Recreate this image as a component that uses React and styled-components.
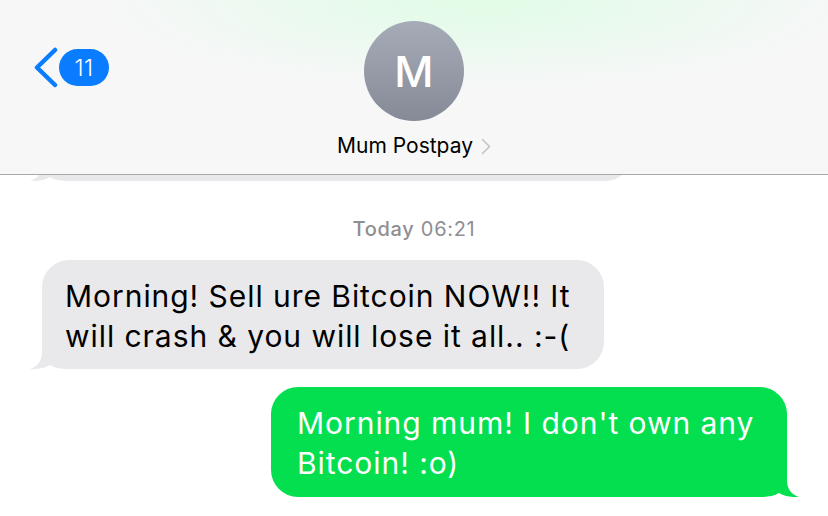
import React from "react";
import styled, { createGlobalStyle } from "styled-components";

const GlobalStyle = createGlobalStyle`
  html, body {
    margin: 0;
    padding: 0;
    background: #ffffff;
  }
  body {
    font-family: Inter, "Noto Sans", "Liberation Sans", sans-serif;
    -webkit-font-smoothing: antialiased;
  }
`;

const colors = {
  blue: "#0a7cff",
  grayBubble: "#e9e9eb",
  green: "#03df4e",
  muted: "#8e8e93"
};

const Screen = styled.div`
  width: 828px;
  height: 516px;
  overflow: hidden;
  display: flex;
  flex-direction: column;
  background: #ffffff;
`;

const Header = styled.header`
  flex: none;
  display: grid;
  grid-template-columns: 1fr auto 1fr;
  padding: 21px 0 15px;
  background: radial-gradient(
      ellipse 380px 90px at 480px 0,
      rgba(224, 252, 230, 1),
      rgba(224, 252, 230, 0)
    ),
    #f7f7f8;
  border-bottom: 1px solid #a9a9ac;
`;

const BackButton = styled.div`
  align-self: start;
  justify-self: start;
  display: flex;
  align-items: center;
  margin: 26px 0 0 33px;
`;

const Badge = styled.span`
  height: 37px;
  min-width: 50px;
  box-sizing: border-box;
  padding: 0 12px;
  border-radius: 19px;
  background: ${colors.blue};
  color: #ffffff;
  font-size: 23px;
  font-weight: 300;
  letter-spacing: 0.5px;
  display: flex;
  align-items: center;
  justify-content: center;
`;

const Contact = styled.div`
  display: flex;
  flex-direction: column;
  align-items: center;
`;

const Avatar = styled.div`
  width: 100px;
  height: 100px;
  border-radius: 50%;
  background: linear-gradient(180deg, #a6acb7 0%, #858a97 100%);
  color: #ffffff;
  font-size: 43px;
  font-weight: 500;
  display: flex;
  align-items: center;
  justify-content: center;
`;

const Name = styled.div`
  margin-top: 12px;
  font-size: 21px;
  line-height: 26px;
  color: #000000;
  display: flex;
  align-items: center;
  gap: 8px;
`;

const Chat = styled.main`
  flex: 1;
  overflow: hidden;
  display: flex;
  flex-direction: column;
`;

const Stamp = styled.div`
  align-self: center;
  margin: ${({ top }) => top}px 0 19px;
  font-size: 20px;
  line-height: 24px;
  letter-spacing: 0.7px;
  color: ${colors.muted};

  b {
    font-weight: 500;
  }
`;

const Bubble = styled.div`
  position: relative;
  box-sizing: border-box;
  width: ${({ width }) => width}px;
  min-height: ${({ height }) => (height ? `${height}px` : "auto")};
  margin-top: ${({ top }) => top || 0}px;
  align-self: ${({ out }) => (out ? "flex-end" : "flex-start")};
  margin-left: ${({ out }) => (out ? 0 : 42)}px;
  margin-right: ${({ out }) => (out ? 41 : 0)}px;
  padding: ${({ out }) => (out ? "16px 20px 14px 26px" : "16px 20px 13px 23px")};
  border-radius: 27px;
  background: ${({ out }) => (out ? colors.green : colors.grayBubble)};
  color: ${({ out }) => (out ? "#ffffff" : "#000000")};
  font-size: 30px;
  line-height: 40px;
  letter-spacing: 0.95px;
`;

const Tail = styled.svg`
  position: absolute;
  bottom: 0;
  ${({ out }) => (out ? "right: -12px; transform: scaleX(-1);" : "left: -12px;")}
`;

const BubbleTail = ({ out }) => (
  <Tail out={out ? 1 : 0} width="40" height="30" viewBox="0 0 40 30">
    <path
      d="M12 0 L12 14 C12 22 7 28 0 30 C8 30.5 15 29 20 26 C25 29 31 30 40 30 L40 0 Z"
      fill={out ? colors.green : colors.grayBubble}
    />
  </Tail>
);

const Message = ({ out, width, height, top, children }) => (
  <Bubble out={out ? 1 : 0} width={width} height={height} top={top}>
    <BubbleTail out={out} />
    <span style={{ position: "relative" }}>{children}</span>
  </Bubble>
);

export default function App() {
  return (
    <Screen>
      <GlobalStyle />
      <Header>
        <BackButton>
          <svg width="26" height="41" viewBox="0 0 26 41">
            <path
              d="M22 3 L4 20.5 L22 38"
              fill="none"
              stroke={colors.blue}
              strokeWidth="4.5"
              strokeLinecap="round"
              strokeLinejoin="round"
            />
          </svg>
          <Badge>11</Badge>
        </BackButton>
        <Contact>
          <Avatar>M</Avatar>
          <Name>
            Mum Postpay
            <svg width="10" height="17" viewBox="0 0 10 17">
              <path
                d="M1.5 1.5 L8.5 8.5 L1.5 15.5"
                fill="none"
                stroke="#c4c4c8"
                strokeWidth="1.6"
                strokeLinecap="round"
                strokeLinejoin="round"
              />
            </svg>
          </Name>
        </Contact>
        <div />
      </Header>
      <Chat>
        <Message width={590} height={110} top={-104} />
        <Stamp top={36}>
          <b>Today</b> 06:21
        </Stamp>
        <Message width={562}>
          Morning! Sell ure Bitcoin NOW!! It will crash &amp; you will lose it
          all.. :-(
        </Message>
        <Message out width={516} top={18}>
          Morning mum! I don't own any Bitcoin! :o)
        </Message>
      </Chat>
    </Screen>
  );
}
